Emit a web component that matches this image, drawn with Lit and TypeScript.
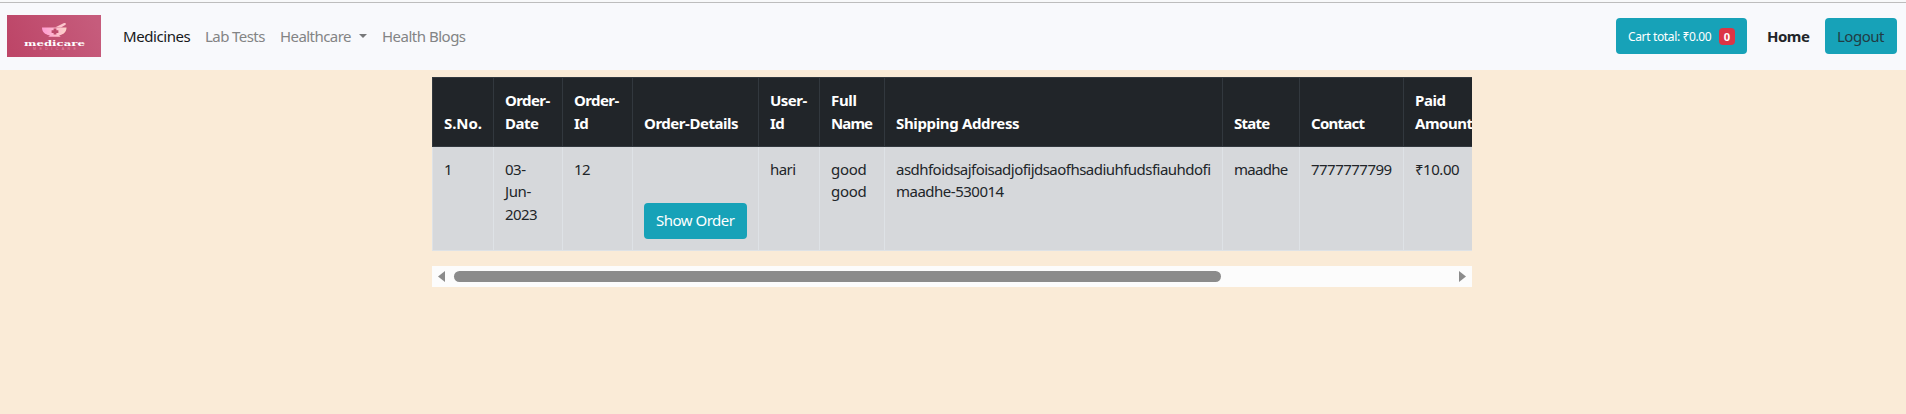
import { LitElement, html, css, TemplateResult } from 'lit';
import { customElement } from 'lit/decorators.js';

/** A run of text with its own tracking, in px. */
const t = (text: string, track = -0.5): TemplateResult =>
  html`<span class="t" style="letter-spacing:${track}px">${text}</span>`;

interface Column {
  width: number;
  head: [string, number][];
  body: [string, number][];
  action?: boolean;
}

const COLUMNS: Column[] = [
  { width: 61, head: [['S.No.', -0.1]], body: [['1', 0]] },
  { width: 69, head: [['Order-', -0.6], ['Date', -0.5]], body: [['03-', -0.5], ['Jun-', -0.4], ['2023', -0.58]] },
  { width: 70, head: [['Order-', -0.6], ['Id', -0.5]], body: [['12', -0.5]] },
  { width: 126, head: [['Order-Details', -0.47]], body: [['Show Order', -0.5]], action: true },
  { width: 61, head: [['User-', -0.51], ['Id', -0.5]], body: [['hari', -0.55]] },
  { width: 65, head: [['Full', -0.32], ['Name', -0.9]], body: [['good', -0.29], ['good', -0.29]] },
  {
    width: 338,
    head: [['Shipping Address', -0.35]],
    body: [['asdhfoidsajfoisadjofijdsaofhsadiuhfudsfiauhdofi', -0.53], ['maadhe-530014', -0.5]],
  },
  { width: 77, head: [['State', -0.75]], body: [['maadhe', -0.7]] },
  { width: 104, head: [['Contact', -0.75]], body: [['7777777799', -0.52]] },
  { width: 96, head: [['Paid', -0.43], ['Amount', -0.5]], body: [['₹10.00', -0.47]] },
];

@customElement('medicare-logo')
export class MedicareLogo extends LitElement {
  static styles = css`
    :host { display: block; width: 94px; height: 42px; }
    svg { display: block; }
    .name { font: bold 8px 'DejaVu Serif', serif; fill: #fff; }
    .sub { font: 3.6px 'Liberation Sans', sans-serif; fill: #e58aa6; }
  `;
  render() {
    return html`<svg width="94" height="42" viewBox="0 0 94 42">
      <defs>
        <linearGradient id="bg" x1="0" y1="0.6" x2="1" y2="0.4">
          <stop offset="0" stop-color="#bd4668" />
          <stop offset="1" stop-color="#c65c7c" />
        </linearGradient>
        <linearGradient id="bowl">
          <stop offset="0" stop-color="#ff9bd3" />
          <stop offset="1" stop-color="#fcd3c9" />
        </linearGradient>
      </defs>
      <rect width="94" height="42" fill="url(#bg)" />
      <path d="M35 12.4H59.5C59.5 17 56.5 19.3 52.5 20.2V20.9L54 21.7H41L42.5 20.9V20.2C38 19.3 35 17 35 12.4Z" fill="url(#bowl)" />
      <path d="M48.5 12.2L56.5 8.2C58.5 7.4 60 8.8 58.2 10L54 12.6Z" fill="#fbc5cc" />
      <path d="M46.6 13.6h2.8v1.7h2v2.6h-2v1.7h-2.8v-1.7h-2v-2.6h2z" fill="#bd4b6b" />
      <text class="name" x="17" y="30.6" textLength="61" lengthAdjust="spacingAndGlyphs">medicare</text>
      <text class="sub" x="26" y="34.5" textLength="43">MEDICARE</text>
    </svg>`;
  }
}

@customElement('app-root')
export class AppRoot extends LitElement {
  static styles = css`
    :host {
      display: block;
      height: 414px;
      overflow: hidden;
      background: #faebd7;
      color: #212529;
      font: 15px/22.5px 'Noto Sans', 'Open Sans', sans-serif;
    }
    * { box-sizing: border-box; }
    .t { white-space: nowrap; }
    .edge { height: 3px; background: #f8f9fa; border-bottom: 1px solid #bdbdbd; }
    nav {
      display: flex;
      align-items: center;
      height: 67px;
      padding: 0 9px 1px 7px;
      background: #f8f9fc;
    }
    .links { display: flex; padding: 1px 0 0 22px; color: #838485; }
    .link { white-space: nowrap; height: 23px; }
    .medicines { width: 82px; color: #17181a; }
    .tests { width: 75px; }
    .care { width: 102px; display: flex; align-items: center; }
    .caret {
      margin: 0 0 1px 8px;
      border: 4px solid transparent;
      border-top-color: #77787a;
      border-bottom: 0;
    }
    .right { display: flex; align-items: center; margin-left: auto; }
    .btn {
      display: flex;
      align-items: center;
      height: 36px;
      padding: 0 12px;
      border-radius: 4px;
      background: #17a2b8;
      color: #fff;
      white-space: nowrap;
    }
    .cart { width: 131px; font-size: 12px; justify-content: space-between; padding-top: 1px; }
    .cart .t { padding-top: 2px; }
    .badge {
      width: 16px;
      height: 17px;
      border-radius: 4px;
      background: #dc3545;
      font-size: 11.2px;
      font-weight: bold;
      line-height: 17px;
      text-align: center;
    }
    .home { width: 78px; padding: 1px 0 0 20px; font-weight: bold; }
    .logout { width: 72px; padding-top: 1px; color: #213c44; }
    .panel { width: 1040px; margin: 7px 0 0 432px; }
    .scroll { overflow: hidden; height: 189px; }
    table {
      width: 1067px;
      table-layout: fixed;
      border-collapse: separate;
      border-spacing: 0;
    }
    th, td { padding: 11px 0 0 11px; text-align: left; border-left: 1px solid #dee2e6; }
    th {
      height: 70px;
      padding: 11px 0 12px 11px;
      vertical-align: bottom;
      background: #212529;
      color: #fff;
      border: solid #32383e;
      border-width: 1px 0 1px 1px;
    }
    td {
      height: 104px;
      vertical-align: top;
      background: #d6d8db;
      border-bottom: 1px solid #dee2e6;
    }
    .line { display: block; height: 22.5px; }
    td .line { height: 22.4px; line-height: 22.4px; }
    .show { width: 103px; margin-top: 45px; padding-bottom: 2px; }
    .bar {
      display: flex;
      align-items: center;
      justify-content: space-between;
      height: 21px;
      padding: 0 6px;
      background: #fcfcfc;
    }
    .bar svg { display: block; }
    .thumb { width: 767px; height: 11px; margin: 0 auto 0 9px; border-radius: 5.5px; background: #8b8b8b; }
  `;

  private cell(c: Column) {
    if (c.action) return html`<td><div class="btn show">${t(...c.body[0])}</div></td>`;
    return html`<td>${c.body.map((l) => html`<span class="line">${t(...l)}</span>`)}</td>`;
  }

  render() {
    return html`
      <div class="edge"></div>
      <nav>
        <medicare-logo></medicare-logo>
        <div class="links">
          <div class="link medicines">${t('Medicines', -0.43)}</div>
          <div class="link tests">${t('Lab Tests', -0.57)}</div>
          <div class="link care">${t('Healthcare', -0.56)}<i class="caret"></i></div>
          <div class="link">${t('Health Blogs', -0.5)}</div>
        </div>
        <div class="right">
          <div class="btn cart">${t('Cart total: ₹0.00', -0.36)}<span class="badge">0</span></div>
          <div class="home">${t('Home', -0.49)}</div>
          <div class="btn logout">${t('Logout', -0.5)}</div>
        </div>
      </nav>
      <div class="panel">
        <div class="scroll">
          <table>
            <colgroup>${COLUMNS.map((c) => html`<col style="width:${c.width}px" />`)}</colgroup>
            <thead>
              <tr>${COLUMNS.map((c) => html`<th>${c.head.map((l) => html`<span class="line">${t(...l)}</span>`)}</th>`)}</tr>
            </thead>
            <tbody><tr>${COLUMNS.map((c) => this.cell(c))}</tr></tbody>
          </table>
        </div>
        <div class="bar">
          <svg width="7" height="11"><path d="M7 0V11L0 5.5Z" fill="#8b8b8b" /></svg>
          <div class="thumb"></div>
          <svg width="7" height="11"><path d="M0 0V11L7 5.5Z" fill="#8b8b8b" /></svg>
        </div>
      </div>
    `;
  }
}
